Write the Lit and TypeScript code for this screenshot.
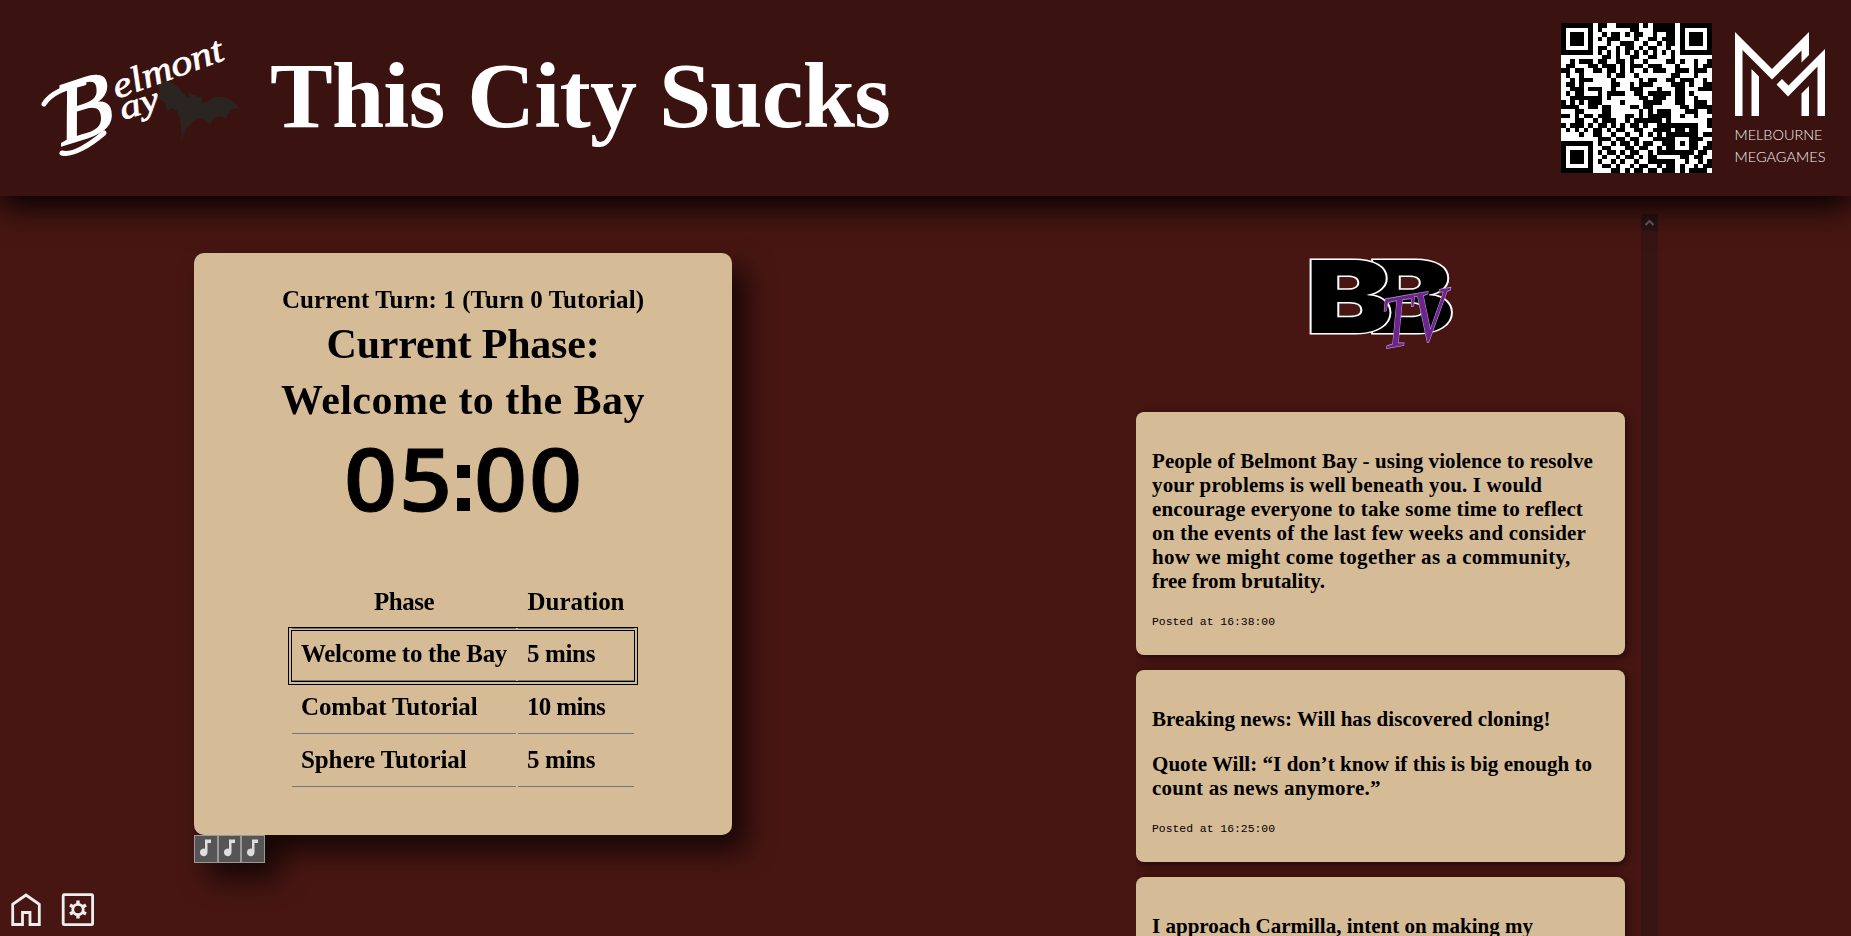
import { LitElement, html, css, svg } from "lit";
import { customElement } from "lit/decorators.js";
import { styleMap } from "lit/directives/style-map.js";

const SERIF = '"Liberation Serif", serif';

const ctx = document.createElement("canvas").getContext("2d")!;

/** Tracking (px) that makes a bold line of the given size span the given width. */
function tracking(text: string, size: number, width: number): string {
  ctx.font = `bold ${size}px ${SERIF}`;
  return `${((width - ctx.measureText(text).width) / text.length).toFixed(3)}px`;
}

const fit = (text: string, size: number, width: number) =>
  html`<span class="fit" style=${styleMap({ letterSpacing: tracking(text, size, width) })}>${text}</span>`;

const QR = [
  "111111101100111110101111101111111",
  "100000101000000110001111101000001",
  "101110100101101011001001101011101",
  "101110101011100010011011101011101",
  "101110100010011100100101101011101",
  "100000101100101101011001001000001",
  "111111101010101010101010101111111",
  "000000000110100110011000100000000",
  "001011101100110100100001101001001",
  "011000110111010111011100010001011",
  "110110011011010100101110011101110",
  "010010000010110010000000110001000",
  "001011100001000001011001101110010",
  "011010000001100101110000111010011",
  "001110111001000111000100011000111",
  "010110001011110011011111011010000",
  "001111111010000001101110011001000",
  "101010111000010000111100011001110",
  "111100110110000110110000001101111",
  "000110000110000001010111000111001",
  "110101101110001101011111001001000",
  "000110010111001011111101000000001",
  "101110101101010110100111111111001",
  "010101011010110011001111011011000",
  "000010011001001001010101111111011",
  "000000001110110110001111100011100",
  "111111101001011010110011101011001",
  "100000100110001101100101100011011",
  "101110101011010110010111111110110",
  "101110100100101101011000001101100",
  "101110101001010010011111100100101",
  "100000100110100101100101101001011",
  "111111100001101011011011101011110",
];

const POSTS: { paras: [string, number][][]; time: string }[] = [
  {
    paras: [[
      ["People of Belmont Bay - using violence to resolve", 441],
      ["your problems is well beneath you. I would", 390.5],
      ["encourage everyone to take some time to reflect", 431],
      ["on the events of the last few weeks and consider", 434],
      ["how we might come together as a community,", 419],
      ["free from brutality.", 173],
    ]],
    time: "16:38:00",
  },
  {
    paras: [
      [["Breaking news: Will has discovered cloning!", 399]],
      [["Quote Will: “I don’t know if this is big enough to", 440.5], ["count as news anymore.”", 228.6]],
    ],
    time: "16:25:00",
  },
  { paras: [[["I approach Carmilla, intent on making my", 381]]], time: "16:20:00" },
];

const PHASES: [string, number, string, number][] = [
  ["Welcome to the Bay", 206, "5 mins", 68],
  ["Combat Tutorial", 177, "10 mins", 78],
  ["Sphere Tutorial", 166, "5 mins", 68],
];

@customElement("app-header")
export class AppHeader extends LitElement {
  static styles = css`
    :host { display: flex; align-items: center; height: 196px; box-sizing: border-box; padding: 0 24px 0 36px;
      background: #3a120f; box-shadow: 0 10px 30px #000; position: relative; z-index: 1; flex: none; }
    .brand { width: 210px; height: 150px; flex: none; overflow: visible; }
    h1 { margin: 0 auto 0 24px; font: bold 94px/120px "Liberation Serif", serif; color: #fff; white-space: nowrap; padding-bottom: 6px; }
    .qr { width: 151px; height: 150px; margin-right: 22px; flex: none; }
    .mm { width: 93px; height: 140px; flex: none; overflow: visible; }
    .script { font-family: "Liberation Serif", serif; font-style: italic; fill: #fff; stroke: #fff; }
    .swash { fill: none; stroke: #fff; stroke-linecap: round; }
    .label { font-family: Lato, sans-serif; font-weight: 300; font-size: 14.5px; fill: #f4eeee; }
  `;
  render() {
    return html`
      <svg class="brand" viewBox="36 23 210 150">
        <path fill="#2b2521" d="M157 83C163 79 172 82 176 86C182 90 184 96 188 98L189 91L193 95Q197 95 199 97L203 96L201 103Q207 103 211 99C220 94 231 98 240 109Q230 106 226 119Q214 112 210 125Q203 115 196 120C188 125 183 133 181 142C183 127 179 113 176 110Q171 106 167 112Q167 100 157 99Q162 91 157 83Z"/>
        <path class="swash" stroke-width="5" d="M44 104C51 93 64 88 84 83"/>
        <path class="swash" stroke-width="5" d="M62 153C72 156 90 145 104 133"/>
        <g class="script">
          <text transform="translate(61 146) rotate(-18) skewX(-8)" font-size="88" stroke-width="1.500" textLength="58" lengthAdjust="spacingAndGlyphs">B</text>
          <text transform="translate(117 99) rotate(-20)" font-size="36" stroke-width=".7" textLength="116" lengthAdjust="spacingAndGlyphs">elmont</text>
          <text transform="translate(123 120) rotate(-17)" font-size="34" stroke-width=".7" textLength="40" lengthAdjust="spacingAndGlyphs">ay</text>
        </g>
      </svg>
      <h1>${fit("This City Sucks", 94, 620)}</h1>
      <svg class="qr" viewBox="0 0 33 33" preserveAspectRatio="none" shape-rendering="crispEdges">
        <rect width="33" height="33" fill="#fff"/>
        ${QR.map((row, y) => [...row].map((c, x) => (c === "1" ? svg`<rect x=${x} y=${y} width="1" height="1"/>` : null)))}
      </svg>
      <svg class="mm" viewBox="1734 28 93 140">
        <g fill="#fff">
          <path d="M1735 32L1772 69L1809 32V55L1801.500 62.500V50.500L1772 79.500L1742.500 50V116H1735Z"/>
          <path d="M1751.500 69L1759 76.500V116H1751.500ZM1801.500 93.500L1809 86V116H1801.500Z"/>
          <path d="M1776.500 84.500L1782 79L1788.500 85.500L1825 49V116H1817.500V66.500L1788 96.500Z"/>
        </g>
        <text class="label" x="1734.500" y="139.500" textLength="88" lengthAdjust="spacingAndGlyphs">MELBOURNE</text>
        <text class="label" x="1734.500" y="161.500" textLength="91" lengthAdjust="spacingAndGlyphs">MEGAGAMES</text>
      </svg>`;
  }
}

@customElement("turn-card")
export class TurnCard extends LitElement {
  static styles = css`
    :host { display: block; width: 538px; margin: 57px 0 0 194px; filter: drop-shadow(14px 16px 14px rgba(0, 0, 0, .7)); }
    .card { box-sizing: border-box; height: 582px; background: #d6bb97; border-radius: 10px; padding-top: 31px;
      display: flex; flex-direction: column; align-items: center; font-family: "Liberation Serif", serif; font-weight: bold; color: #000; }
    .turn { font-size: 25px; line-height: 32px; }
    .phase { font-size: 42px; line-height: 56px; white-space: nowrap; }
    .clock { display: flex; font: 600 86px/104px "Open Sans", sans-serif; height: 104px; margin-top: -2px; -webkit-text-stroke: .8px #000; }
    .digit { width: 55px; text-align: center; transform: scaleX(1.08); }
    .colon { width: 20.500px; display: flex; flex-direction: column; align-items: center; gap: 20px; padding-top: 39px; }
    .dot { flex: none; width: 13px; height: 13px; background: #000; }
    table { table-layout: fixed; width: 346px; border-spacing: 2px; margin-top: 46px; font-size: 25px; line-height: 30px; border-collapse: separate; }
    th, td { box-sizing: border-box; height: 50.660px; padding: 0 9px 2px; border-bottom: 1px solid #70767e; text-align: left; white-space: nowrap; }
    th { text-align: center; }
    .c1 { width: 224px; } .c2 { width: 116px; }
    tr.now { outline: 4px double #000; }
    .tiles { display: flex; height: 28px; width: 71px; }
    .tile { flex: 1; box-sizing: border-box; background: #555; border: 1px solid #999; display: flex; justify-content: center; }
    .tile svg { width: 14px; height: 18px; margin-top: 3px; }
  `;
  render() {
    return html`
      <div class="card">
        <div class="turn">${fit("Current Turn: 1 (Turn 0 Tutorial)", 25, 363)}</div>
        <div class="phase">${fit("Current Phase:", 42, 273)}</div>
        <div class="phase">${fit("Welcome to the Bay", 42, 364)}</div>
        <div class="clock">
          <span class="digit">0</span><span class="digit">5</span>
          <span class="colon"><i class="dot"></i><i class="dot"></i></span>
          <span class="digit">0</span><span class="digit">0</span>
        </div>
        <table>
          <tr><th class="c1">${fit("Phase", 25, 60)}</th><th class="c2">${fit("Duration", 25, 97)}</th></tr>
          ${PHASES.map(([n, w, d, dw], i) => html`<tr class=${i === 0 ? "now" : ""}><td>${fit(n, 25, w)}</td><td>${fit(d, 25, dw)}</td></tr>`)}
        </table>
      </div>
      <div class="tiles">
        ${[0, 1, 2].map(() => html`<span class="tile"><svg viewBox="0 0 14 18"><path fill="#ddd" d="M6 0.500H12V4H8.500V13A3.800 3.800 0 1 1 6 9.800Z"/></svg></span>`)}
      </div>`;
  }
}

@customElement("news-feed")
export class NewsFeed extends LitElement {
  static styles = css`
    :host { display: flex; width: 522px; margin: 18px 193px 0 auto; overflow: hidden; }
    .list { flex: 1; display: flex; flex-direction: column; align-items: center; gap: 15.300px; padding-right: 16px; }
    .logo { width: 150px; height: 110px; margin: 38px 0 34.700px; flex: none; overflow: visible; }
    .post { width: 489px; box-sizing: border-box; flex: none; background: #d6bb97; border-radius: 8px; padding: 36.700px 0 25px 16px;
      box-shadow: 2px 2px 10px rgba(0, 0, 0, .6); font: bold 21px/24px "Liberation Serif", serif; color: #000; }
    .post p { margin: 0 0 21px; }
    .line { display: block; white-space: nowrap; }
    .time { display: block; font: 11.400px/16px "Liberation Mono", monospace; }
    .bar { width: 17px; background: #371514; flex: none; }
    .up { height: 17px; background: #2a1313; display: flex; align-items: center; justify-content: center; }
    .up svg { width: 11px; height: 9px; }
    .bb { font-family: Inter, sans-serif; font-weight: 900; font-size: 100px; fill: #000; stroke: #fff; stroke-width: 3; paint-order: stroke; }
    .tv { font-family: "Liberation Serif", serif; font-style: italic; fill: #6b2490; stroke: #b99aca; stroke-width: 1.400; paint-order: stroke; }
  `;
  render() {
    return html`
      <div class="list">
        <svg class="logo" viewBox="1306 252 150 110">
          <g class="bb">
            <text x="1367" y="332.500" textLength="87" lengthAdjust="spacingAndGlyphs">B</text>
            <text x="1305.500" y="332.500" textLength="87" lengthAdjust="spacingAndGlyphs">B</text>
          </g>
          <text class="tv" transform="translate(1382 349) rotate(-10) skewX(-8)" font-size="74" textLength="66" lengthAdjust="spacingAndGlyphs">TV</text>
        </svg>
        ${POSTS.map((p) => html`<div class="post">
          ${p.paras.map((para) => html`<p>${para.map(([t, w]) => html`<span class="line">${fit(t, 21, w)}</span>`)}</p>`)}
          <span class="time">Posted at ${p.time}</span>
        </div>`)}
      </div>
      <div class="bar"><div class="up"><svg viewBox="0 0 11 9"><path d="M1.500 7L5.500 3L9.500 7" fill="none" stroke="#6c5b5b" stroke-width="2"/></svg></div></div>`;
  }
}

@customElement("app-root")
export class AppRoot extends LitElement {
  static styles = css`
    :host { display: flex; flex-direction: column; width: 100%; height: 100vh; overflow: hidden; background: #471612; position: relative; }
    .main { flex: 1; min-height: 0; display: flex; align-items: stretch; }
    .nav { position: absolute; left: 8px; bottom: 8px; display: flex; gap: 16px; }
    .nav svg { width: 36px; height: 36px; fill: none; stroke: #eee; stroke-width: 2.800; }
  `;
  render() {
    return html`
      <app-header></app-header>
      <div class="main"><turn-card></turn-card><news-feed></news-feed></div>
      <nav class="nav">
        <svg viewBox="8 892 36 36"><path d="M12.700 924.500V904.300L26 895L39.300 904.300V924.500H30V912.500H22.500V924.500Z"/></svg>
        <svg viewBox="60 892 36 36"><rect x="63.200" y="894.700" width="29.400" height="30" rx="1"/>
          <circle cx="78" cy="909.500" r="5.200"/>
          <path stroke-width="3.400" d="M78 904.500V900.500M78 914.500V918.500M73.600 907L70 905M82.400 907L86 905M73.600 912L70 914M82.400 912L86 914"/>
        </svg>
      </nav>`;
  }
}
